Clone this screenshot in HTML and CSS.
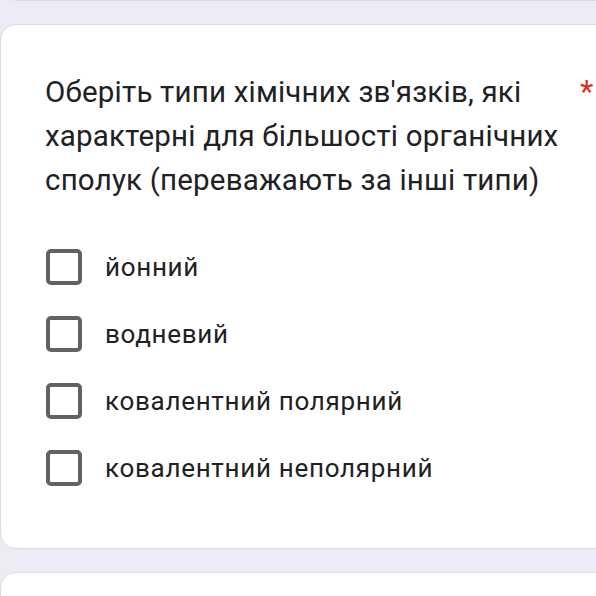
FILE: index.html
```html
<!DOCTYPE html>
<html lang="uk">
<head>
<meta charset="utf-8">
<link rel="stylesheet" href="styles.css">
</head>
<body>
<div class="stack">
  <div class="card prev"></div>
  <div class="card main">
    <div class="title-row">
      <div class="title">Оберіть типи хімічних зв'язків, які характерні для більшості органічних сполук (переважають за інші типи)</div>
      <span class="req">*</span>
    </div>
    <div class="options">
      <label class="option"><span class="box"></span><span class="label">йонний</span></label>
      <label class="option"><span class="box"></span><span class="label">водневий</span></label>
      <label class="option"><span class="box"></span><span class="label">ковалентний полярний</span></label>
      <label class="option"><span class="box"></span><span class="label">ковалентний неполярний</span></label>
    </div>
  </div>
  <div class="card next"></div>
</div>
</body>
</html>
```
FILE: styles.css
```css
html, body {
  margin: 0;
  padding: 0;
}
body {
  background: #eeeaf6;
  font-family: Roboto, "Noto Sans", sans-serif;
  color: #202124;
  overflow: hidden;
  width: 596px;
  height: 596px;
}
.stack {
  display: flex;
  flex-direction: column;
  gap: 23px;
  margin-top: -30px;
  width: 640px;
}
.card {
  background: #fff;
  border: 1px solid #dadce0;
  border-radius: 16px;
  box-sizing: border-box;
}
.prev {
  height: 31px;
}
.main {
  height: 525px;
  padding: 45px 0 0 44px;
}
.next {
  height: 60px;
}
.title-row {
  display: flex;
  align-items: flex-start;
}
.title {
  width: 528px;
  font-size: 29.5px;
  line-height: 44px;
  letter-spacing: 0.2px;
}
.req {
  color: #d93025;
  font-size: 31px;
  line-height: 44px;
  margin-left: 7px;
}
.options {
  display: flex;
  flex-direction: column;
  margin-top: 31px;
}
.option {
  display: flex;
  align-items: center;
  height: 67px;
  gap: 23px;
}
.box {
  width: 36px;
  height: 36px;
  box-sizing: border-box;
  border: 4px solid #5f6368;
  border-radius: 5px;
  margin-left: 1px;
}
.label {
  font-size: 26px;
  letter-spacing: 0.7px;
}
```
